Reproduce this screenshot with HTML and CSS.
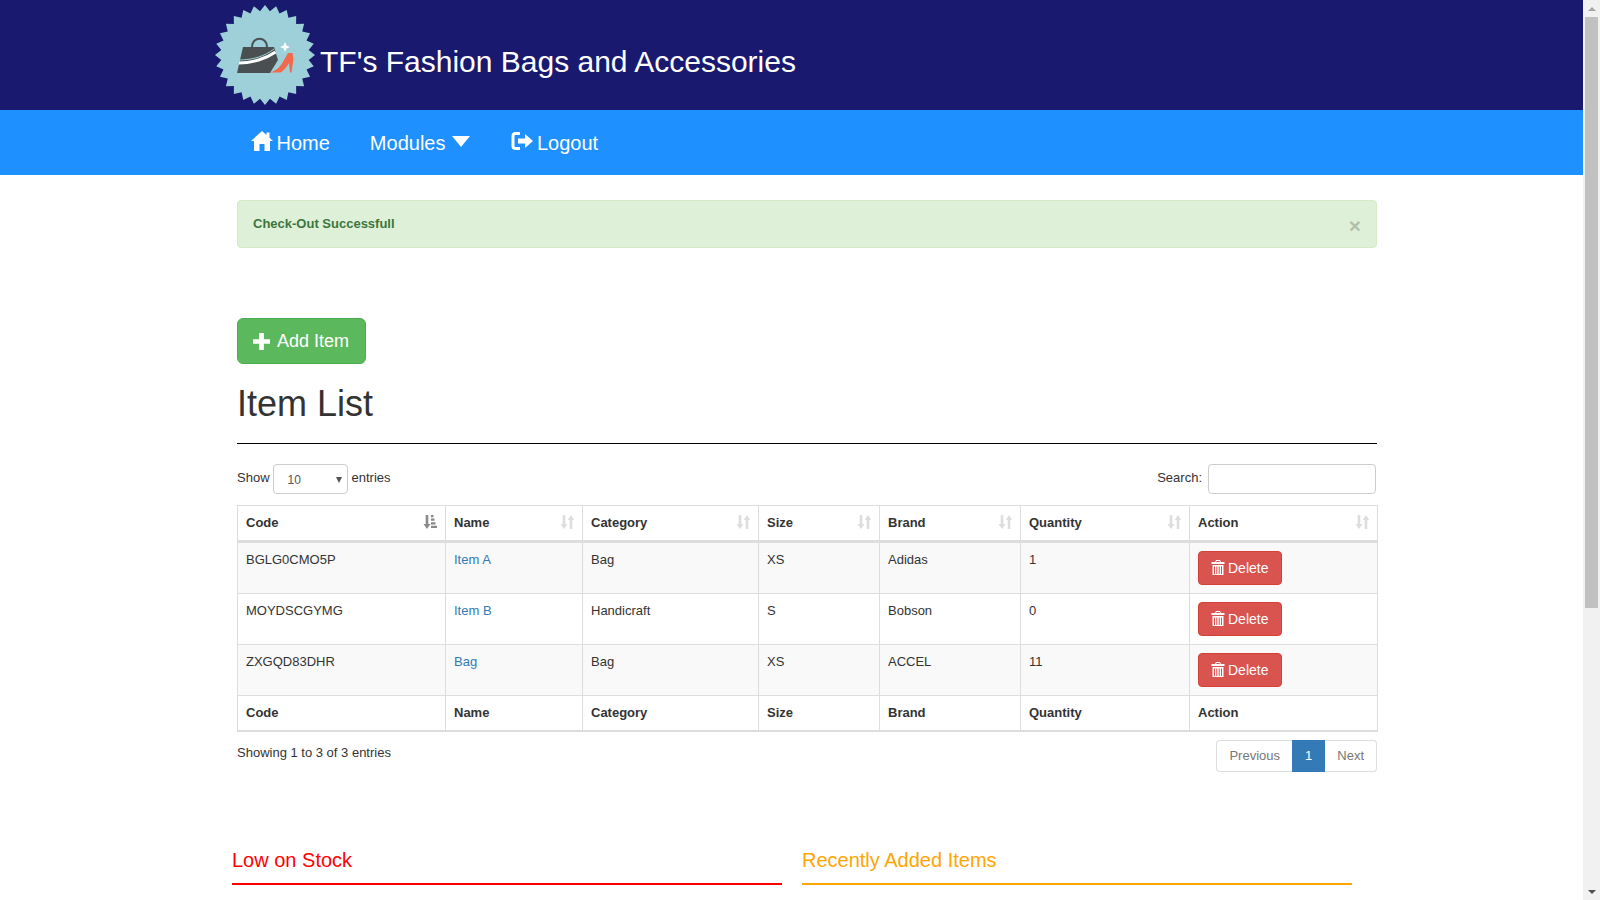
FILE: index.html
```html
<!DOCTYPE html>
<html lang="en">
<head>
<meta charset="utf-8">
<title>TF's Fashion Bags and Accessories</title>
<link rel="stylesheet" href="styles.css">
</head>
<body>
<svg class="defs" aria-hidden="true">
  <defs>
    <symbol id="i-sort" viewBox="0 0 14 14"><path d="M2.700 0h2.600v9h2.200L4 14 .5 9h2.200zM9.700 14h2.600V5h1.900L11 0 7.800 5h1.900z"/></symbol>
    <symbol id="i-trash" viewBox="0 0 14 15"><path d="M5 0h4l1 2h3.500v2H.5V2H4zM5.500 1 5 2h4l-.5-1zM1.500 5h11v10h-11zM3 6.500V14h1V6.500zM5.300 6.500V14h1V6.500zM7.700 6.500V14h1V6.500zM10 6.500V14h1V6.500z" fill-rule="evenodd"/></symbol>
  </defs>
</svg>
<main class="page">
  <header class="brand">
    <svg class="logo" viewBox="-50 -50 100 100" aria-hidden="true">
      <polygon fill="#9dd0d8" points="50,0 43.72,4.93 48.75,11.13 41.53,14.53 45.05,21.69 37.25,23.41 39.09,31.17 31.11,31.11 31.17,39.09 23.41,37.25 21.69,45.05 14.53,41.53 11.13,48.75 4.93,43.72 0,50 -4.93,43.72 -11.13,48.75 -14.53,41.53 -21.69,45.05 -23.41,37.25 -31.17,39.09 -31.11,31.11 -39.09,31.17 -37.25,23.41 -45.05,21.69 -41.53,14.53 -48.75,11.13 -43.72,4.93 -50,0 -43.72,-4.93 -48.75,-11.13 -41.53,-14.53 -45.05,-21.69 -37.25,-23.41 -39.09,-31.17 -31.11,-31.11 -31.17,-39.09 -23.41,-37.25 -21.69,-45.05 -14.53,-41.53 -11.13,-48.75 -4.93,-43.72 0,-50 4.93,-43.72 11.13,-48.75 14.53,-41.53 21.69,-45.05 23.41,-37.25 31.17,-39.09 31.11,-31.11 39.09,-31.17 37.25,-23.41 45.05,-21.69 41.53,-14.53 48.75,-11.13 43.72,-4.93"/>
      <path fill="none" stroke="#4a4f52" stroke-width="2" d="M-13-8c0-11 15-11 15 0"/>
      <path fill="#4a4f52" d="M-22-8H9L13 5 5 18H-28z"/>
      <path fill="none" stroke="#9dd0d8" stroke-width="1" d="M-26 5C-12 5 0 1 9-6"/>
      <path fill="none" stroke="#fff" stroke-width="3" d="M-26 8C-12 8 2 3 10.500-3"/>
      <path fill="#f4694c" d="M5 17.500C12 15.500 16 11 19 5L23-2 27.500-2 28.500 4 26.500 17.500H25L24 8C22 11.500 19 15.500 15.500 17.500z"/>
      <path fill="#fff" d="M20-13l1.500 3.500L25-8l-3.500 1.500L20-3l-1.500-3.500L15-8l3.500-1.500z"/>
    </svg>
    <h1 class="brand-title">TF's Fashion Bags and Accessories</h1>
  </header>
  <nav class="nav">
    <a class="nav-item nav-home" href="#">
      <svg class="nav-icon" viewBox="0 0 22 20" aria-hidden="true"><path d="M11 0 15.500 4V1.500H18.500V6.800L22 10H19V20H13.500V13H8.500V20H3V10H0z"/></svg>
      Home</a>
    <a class="nav-item nav-modules" href="#">Modules<span class="caret"></span></a>
    <a class="nav-item nav-logout" href="#">
      <svg class="nav-icon" viewBox="0 0 22 20" aria-hidden="true"><path d="M9 2.500H4.500Q2 2.500 2 5V15Q2 17.500 4.500 17.500H9" fill="none" stroke="#fff" stroke-width="3"/><path d="M7 7.500H14V3L22 10 14 17V12.500H7z"/></svg>
      Logout</a>
  </nav>
  <div class="content">
    <div class="alert">
      <strong>Check-Out Successfull</strong>
      <span class="alert-close">×</span>
    </div>
    <a class="btn-add" href="#">
      <svg class="add-icon" viewBox="0 0 18 18" aria-hidden="true"><path d="M6.500 0h5v6.500H18v5h-6.500V18h-5v-6.500H0v-5h6.500z"/></svg>
      Add Item</a>
    <h2 class="list-title">Item List</h2>
    <hr class="rule">
    <div class="controls">
      <label class="length">Show
        <span class="select-wrap"><select class="select"><option>10</option></select></span>
        entries</label>
      <label class="search">Search: <input class="search-input" type="search"></label>
    </div>
    <table class="table">
      <colgroup>
        <col class="c-code"><col class="c-name"><col class="c-cat"><col class="c-size"><col class="c-brand"><col class="c-qty"><col class="c-act">
      </colgroup>
      <thead>
        <tr>
          <th>Code
            <svg class="sort sort-on" viewBox="0 0 14 14" aria-hidden="true"><path d="M2.700 0h2.600v9h2.200L4 14 .5 9h2.200z"/><path d="M8 0h2.500v2.200H8zM8 3.600h3.500v2.200H8zM8 7.200h4.500v2.200H8zM8 10.800h6V13H8z"/></svg></th>
          <th>Name <svg class="sort"><use href="#i-sort"/></svg></th>
          <th>Category <svg class="sort"><use href="#i-sort"/></svg></th>
          <th>Size <svg class="sort"><use href="#i-sort"/></svg></th>
          <th>Brand <svg class="sort"><use href="#i-sort"/></svg></th>
          <th>Quantity <svg class="sort"><use href="#i-sort"/></svg></th>
          <th>Action <svg class="sort"><use href="#i-sort"/></svg></th>
        </tr>
      </thead>
      <tbody>
        <tr class="odd">
          <td>BGLG0CMO5P</td><td><a class="link" href="#">Item A</a></td><td>Bag</td><td>XS</td><td>Adidas</td><td>1</td>
          <td><a class="btn-del" href="#"><svg class="del-icon"><use href="#i-trash"/></svg> Delete</a></td>
        </tr>
        <tr>
          <td>MOYDSCGYMG</td><td><a class="link" href="#">Item B</a></td><td>Handicraft</td><td>S</td><td>Bobson</td><td>0</td>
          <td><a class="btn-del" href="#"><svg class="del-icon"><use href="#i-trash"/></svg> Delete</a></td>
        </tr>
        <tr class="odd">
          <td>ZXGQD83DHR</td><td><a class="link" href="#">Bag</a></td><td>Bag</td><td>XS</td><td>ACCEL</td><td>11</td>
          <td><a class="btn-del" href="#"><svg class="del-icon"><use href="#i-trash"/></svg> Delete</a></td>
        </tr>
      </tbody>
      <tfoot>
        <tr><th>Code</th><th>Name</th><th>Category</th><th>Size</th><th>Brand</th><th>Quantity</th><th>Action</th></tr>
      </tfoot>
    </table>
    <div class="table-foot">
      <div class="info">Showing 1 to 3 of 3 entries</div>
      <div class="pager">
        <a class="pg pg-prev" href="#">Previous</a>
        <a class="pg pg-active" href="#">1</a>
        <a class="pg pg-next" href="#">Next</a>
      </div>
    </div>
  </div>
  <div class="panels">
    <section class="panel panel-low"><h3 class="panel-title">Low on Stock</h3></section>
    <section class="panel panel-new"><h3 class="panel-title">Recently Added Items</h3></section>
  </div>
</main>
<aside class="scrollbar" aria-hidden="true">
  <div class="sb-btn"><span class="sb-up"></span></div>
  <div class="sb-track"><div class="sb-thumb"></div></div>
  <div class="sb-btn"><span class="sb-down"></span></div>
</aside>
</body>
</html>
```

FILE: styles.css
```css
* { box-sizing: border-box; }
html, body { margin: 0; height: 100%; overflow: hidden; }
body {
  display: flex;
  font-family: "Liberation Sans", Arial, sans-serif;
  font-size: 13px;
  line-height: 18.57px;
  color: #333;
  background: #fff;
}
.defs { display: none; }
.page { flex: 1; min-width: 0; height: 900px; overflow: hidden; }

.brand {
  height: 110px;
  background: #191970;
  display: flex;
  padding-left: 215px;
  padding-top: 5px;
}
.logo { width: 100px; height: 100px; flex: none; }
.brand-title {
  margin: 37px 0 0 5px;
  font-size: 30px;
  line-height: 40px;
  font-weight: 400;
  color: #fff;
}

.nav {
  height: 65px;
  background: #1e90ff;
  display: flex;
  align-items: center;
  padding-left: 251px;
}
.nav-item {
  display: flex;
  align-items: center;
  color: #fff;
  text-decoration: none;
  font-size: 20px;
  line-height: 24px;
}
.nav-icon { width: 22px; height: 20px; fill: #fff; margin-right: 3.500px; margin-top: -4px; }
.nav-modules { margin-left: 40px; }
.nav-logout { margin-left: 41px; }
.caret {
  width: 0;
  height: 0;
  margin-left: 7px;
  margin-top: -3px;
  border-left: 9.500px solid transparent;
  border-right: 9.500px solid transparent;
  border-top: 11px solid #fff;
}

.content { width: 1140px; margin-left: 237px; padding-top: 25px; }
.alert {
  height: 48px;
  background: #dff0d8;
  border: 1px solid #d6e9c6;
  border-radius: 4px;
  color: #3c763d;
  padding: 14px 15px;
  display: flex;
  justify-content: space-between;
}
.alert-close {
  font-size: 21px;
  font-weight: 700;
  color: #000;
  opacity: .2;
  margin: 2px 0 0;
}

.btn-add {
  display: flex;
  align-items: center;
  width: 129px;
  height: 46px;
  margin-top: 70px;
  padding-left: 15px;
  background: #5cb85c;
  border: 1px solid #4cae4c;
  border-radius: 6px;
  color: #fff;
  font-size: 18px;
  text-decoration: none;
}
.add-icon { width: 17px; height: 17px; fill: #fff; margin-right: 7px; }

.list-title {
  margin: 20px 0 0;
  font-size: 36px;
  line-height: 40px;
  font-weight: 400;
}
.rule { margin: 19px 0 0; border: 0; border-top: 1px solid #000; }

.controls {
  display: flex;
  justify-content: space-between;
  align-items: center;
  height: 31px;
  margin-top: 20px;
  padding-right: 1px;
}
.length, .search { display: flex; align-items: center; margin-top: -2px; }
.select-wrap { position: relative; display: block; margin: 1px 4px 0 3px; }
.select-wrap::after {
  content: "";
  position: absolute;
  right: 6px;
  top: 13px;
  border-left: 3px solid transparent;
  border-right: 3px solid transparent;
  border-top: 6px solid #555;
}
.select {
  display: block;
  appearance: none;
  width: 75px;
  height: 30px;
  padding: 2px 14px 0;
  border: 1px solid #ccc;
  border-radius: 4px;
  background: #fff;
  color: #555;
  font: 12px "Liberation Sans", Arial, sans-serif;
}
.search-input {
  display: block;
  width: 168px;
  height: 30px;
  margin: 1px 0 0 6px;
  border: 1px solid #ccc;
  border-radius: 4px;
  background: #fff;
}

.table {
  width: 1140px;
  margin-top: 10px;
  table-layout: fixed;
  border-collapse: collapse;
  border: 1px solid #ddd;
  border-bottom: 2px solid #ddd;
}
.c-code { width: 208px; }
.c-name { width: 137px; }
.c-cat { width: 176px; }
.c-size { width: 121px; }
.c-brand { width: 141px; }
.c-qty { width: 169px; }
.c-act { width: 188px; }
.table th, .table td {
  border: 1px solid #ddd;
  padding: 8px;
  text-align: left;
  vertical-align: top;
}
.table th { font-weight: 700; position: relative; height: 35px; }
.table thead th { height: 35px; padding-bottom: 7px; border-bottom: 3px solid #ddd; }
.table td { height: 51px; }
.table .odd td { background: #f9f9f9; }
.sort {
  position: absolute;
  right: 8px;
  top: 9px;
  width: 14px;
  height: 14px;
  fill: #ddd;
}
.sort-on { fill: #8a8a8a; }
.link { color: #337ab7; text-decoration: none; }
.btn-del {
  display: flex;
  align-items: center;
  width: 84px;
  height: 34px;
  padding-left: 12px;
  padding-top: 1px;
  background: #d9534f;
  border: 1px solid #d43f3a;
  border-radius: 4px;
  color: #fff;
  font-size: 14px;
  text-decoration: none;
}
.del-icon { width: 14px; height: 15px; fill: #fff; margin-right: 3px; margin-top: -2px; }

.table-foot { display: flex; justify-content: space-between; margin-top: 8px; }
.info { padding-top: 4px; }
.pager { display: flex; height: 32px; }
.pg {
  padding: 6px 12px;
  border: 1px solid #ddd;
  background: #fff;
  color: #777;
  text-decoration: none;
}
.pg-prev { border-radius: 4px 0 0 4px; border-right: 0; }
.pg-active { background: #337ab7; border-color: #337ab7; color: #fff; }
.pg-next { border-radius: 0 4px 4px 0; border-left: 0; }

.panels { display: flex; margin-left: 232px; margin-top: 73px; gap: 20px; }
.panel { width: 550px; }
.panel-title {
  margin: 0;
  height: 40px;
  padding-top: 1px;
  font-size: 20px;
  line-height: 28px;
  font-weight: 400;
  border-bottom: 2px solid;
}
.panel-low .panel-title { color: #ff0000; border-color: #ff0000; }
.panel-new .panel-title { color: #ffa500; border-color: #ffa500; }

.scrollbar {
  flex: none;
  width: 17px;
  height: 900px;
  background: #f1f1f1;
  display: flex;
  flex-direction: column;
}
.sb-btn { height: 17px; display: flex; align-items: center; justify-content: center; flex: none; }
.sb-up {
  border-left: 4px solid transparent;
  border-right: 4px solid transparent;
  border-bottom: 4px solid #a3a3a3;
}
.sb-down {
  border-left: 4px solid transparent;
  border-right: 4px solid transparent;
  border-top: 4px solid #505050;
}
.sb-track { flex: 1; padding: 0 2px; }
.sb-thumb { height: 591px; background: #c1c1c1; }
```
